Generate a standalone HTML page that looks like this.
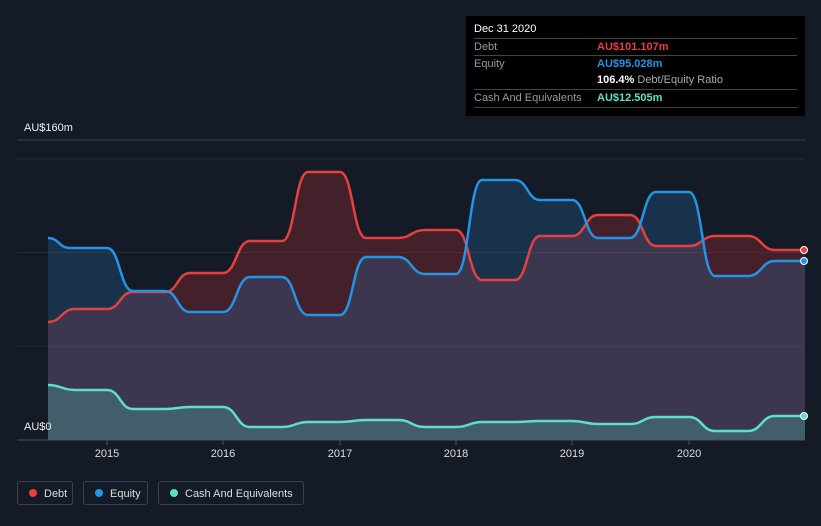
<!DOCTYPE html>
<html><head><meta charset="utf-8"><style>
body{margin:0;width:821px;height:526px;background:#151b26;font-family:"Liberation Sans",sans-serif;overflow:hidden;position:relative}
.tt{position:absolute;left:466px;top:16px;width:339px;height:100px;background:#000;color:#ddd;font-size:11px}
.tt .r{position:absolute;left:8px;right:8px;height:17px;line-height:17px}
.tt .l{color:#999}
.tt .v{position:absolute;left:123px;font-weight:bold}
.lg{position:absolute;top:481px;height:24px;border:1px solid #3a4150;border-radius:3px;color:#ddd;font-size:11px;line-height:24px;box-sizing:border-box}
.dot{display:inline-block;width:8px;height:8px;border-radius:50%;margin:0 7px 0 11px;vertical-align:-0px}
.ax{position:absolute;color:#eee;font-size:11px}
</style></head><body>
<svg width="821" height="526" style="position:absolute;left:0;top:0">
<line x1="17" y1="140" x2="805" y2="140" stroke="#3a404c"/>
<line x1="17" y1="159" x2="805" y2="159" stroke="#262c38"/>
<line x1="17" y1="252.5" x2="805" y2="252.5" stroke="#262c38"/>
<line x1="17" y1="346" x2="805" y2="346" stroke="#262c38"/>
<path d="M48,322 C61.5,322 61.5,309 75,309 L107,309 C120,309 120,292 133,292 L165,292 C177.5,292 177.5,273 190,273 L223,273 C236.5,273 236.5,241 250,241 L282,241 C295,241 295,172 308,172 L340,172 C353,172 353,238 366,238 L398,238 C411.5,238 411.5,230 425,230 L456,230 C469,230 469,280 482,280 L515,280 C527.5,280 527.5,236 540,236 L572,236 C585,236 585,215 598,215 L630,215 C643,215 643,246 656,246 L689,246 C702,246 702,236 715,236 L748,236 C761.5,236 761.5,250 775,250 L805,250 L805,440 L48,440Z" fill="rgba(190,45,55,0.28)"/>
<path d="M48,238 C59,238 59,248 70,248 L107,248 C120,248 120,291 133,291 L165,291 C177.5,291 177.5,312 190,312 L223,312 C236.5,312 236.5,277 250,277 L282,277 C295,277 295,315 308,315 L340,315 C353,315 353,257 366,257 L398,257 C411.5,257 411.5,274 425,274 L456,274 C469,274 469,180 482,180 L515,180 C527.5,180 527.5,200 540,200 L572,200 C585,200 585,238 598,238 L630,238 C643,238 643,192 656,192 L689,192 C702,192 702,276 715,276 L748,276 C761.5,276 761.5,261 775,261 L805,261 L805,440 L48,440Z" fill="rgba(40,120,190,0.25)"/>
<path d="M48,385 C61.5,385 61.5,390 75,390 L107,390 C120,390 120,409 133,409 L165,409 C177.5,409 177.5,407 190,407 L223,407 C236.5,407 236.5,427 250,427 L282,427 C295,427 295,422 308,422 L340,422 C353,422 353,420 366,420 L398,420 C411.5,420 411.5,427 425,427 L456,427 C469,427 469,422 482,422 L515,422 C527.5,422 527.5,421 540,421 L572,421 C585,421 585,424 598,424 L630,424 C643,424 643,417 656,417 L689,417 C702,417 702,431 715,431 L748,431 C761.5,431 761.5,416 775,416 L805,416 L805,440 L48,440Z" fill="rgba(80,190,170,0.3)"/>
<path d="M48,322 C61.5,322 61.5,309 75,309 L107,309 C120,309 120,292 133,292 L165,292 C177.5,292 177.5,273 190,273 L223,273 C236.5,273 236.5,241 250,241 L282,241 C295,241 295,172 308,172 L340,172 C353,172 353,238 366,238 L398,238 C411.5,238 411.5,230 425,230 L456,230 C469,230 469,280 482,280 L515,280 C527.5,280 527.5,236 540,236 L572,236 C585,236 585,215 598,215 L630,215 C643,215 643,246 656,246 L689,246 C702,246 702,236 715,236 L748,236 C761.5,236 761.5,250 775,250 L805,250" fill="none" stroke="#e64040" stroke-width="2.5"/>
<path d="M48,238 C59,238 59,248 70,248 L107,248 C120,248 120,291 133,291 L165,291 C177.5,291 177.5,312 190,312 L223,312 C236.5,312 236.5,277 250,277 L282,277 C295,277 295,315 308,315 L340,315 C353,315 353,257 366,257 L398,257 C411.5,257 411.5,274 425,274 L456,274 C469,274 469,180 482,180 L515,180 C527.5,180 527.5,200 540,200 L572,200 C585,200 585,238 598,238 L630,238 C643,238 643,192 656,192 L689,192 C702,192 702,276 715,276 L748,276 C761.5,276 761.5,261 775,261 L805,261" fill="none" stroke="#2394e6" stroke-width="2.5"/>
<path d="M48,385 C61.5,385 61.5,390 75,390 L107,390 C120,390 120,409 133,409 L165,409 C177.5,409 177.5,407 190,407 L223,407 C236.5,407 236.5,427 250,427 L282,427 C295,427 295,422 308,422 L340,422 C353,422 353,420 366,420 L398,420 C411.5,420 411.5,427 425,427 L456,427 C469,427 469,422 482,422 L515,422 C527.5,422 527.5,421 540,421 L572,421 C585,421 585,424 598,424 L630,424 C643,424 643,417 656,417 L689,417 C702,417 702,431 715,431 L748,431 C761.5,431 761.5,416 775,416 L805,416" fill="none" stroke="#5ee0c8" stroke-width="2.5"/>
<line x1="17" y1="440" x2="805" y2="440" stroke="#4a505c"/>
<g stroke="#4a505c"><line x1="107" y1="440" x2="107" y2="445"/><line x1="223" y1="440" x2="223" y2="445"/><line x1="340" y1="440" x2="340" y2="445"/><line x1="456" y1="440" x2="456" y2="445"/><line x1="572" y1="440" x2="572" y2="445"/><line x1="689" y1="440" x2="689" y2="445"/></g>
<circle cx="804" cy="250" r="3.5" fill="#e64040" stroke="#fff" stroke-width="1"/>
<circle cx="804" cy="261" r="3.5" fill="#2394e6" stroke="#fff" stroke-width="1"/>
<circle cx="804" cy="416" r="3.5" fill="#5ee0c8" stroke="#fff" stroke-width="1"/>
<g fill="#ddd" font-size="11" font-family="Liberation Sans" text-anchor="middle"><text x="107" y="457">2015</text><text x="223" y="457">2016</text><text x="340" y="457">2017</text><text x="456" y="457">2018</text><text x="572" y="457">2019</text><text x="689" y="457">2020</text></g>
</svg>
<div class="ax" style="left:24px;top:122px">AU$160m</div>
<div class="ax" style="left:24px;top:421px">AU$0</div>
<div class="tt">
<div class="r" style="top:5px;color:#fff">Dec 31 2020</div>
<div class="r" style="top:22px;border-top:1px solid #444"><span class="l">Debt</span><span class="v" style="color:#e64040">AU$101.107m</span></div>
<div class="r" style="top:39px;border-top:1px solid #444"><span class="l">Equity</span><span class="v" style="color:#2394e6">AU$95.028m</span></div>
<div class="r" style="top:56px"><span class="v" style="color:#fff">106.4% <span style="font-weight:normal;color:#aaa">Debt/Equity Ratio</span></span></div>
<div class="r" style="top:73px;border-top:1px solid #444;border-bottom:1px solid #444"><span class="l">Cash And Equivalents</span><span class="v" style="color:#5ee0c8">AU$12.505m</span></div>
</div>
<div class="lg" style="left:17px;width:56px"><span class="dot" style="background:#e64040"></span>Debt</div>
<div class="lg" style="left:83px;width:65px"><span class="dot" style="background:#2394e6"></span>Equity</div>
<div class="lg" style="left:158px;width:146px"><span class="dot" style="background:#5ee0c8"></span>Cash And Equivalents</div>
</body></html>
